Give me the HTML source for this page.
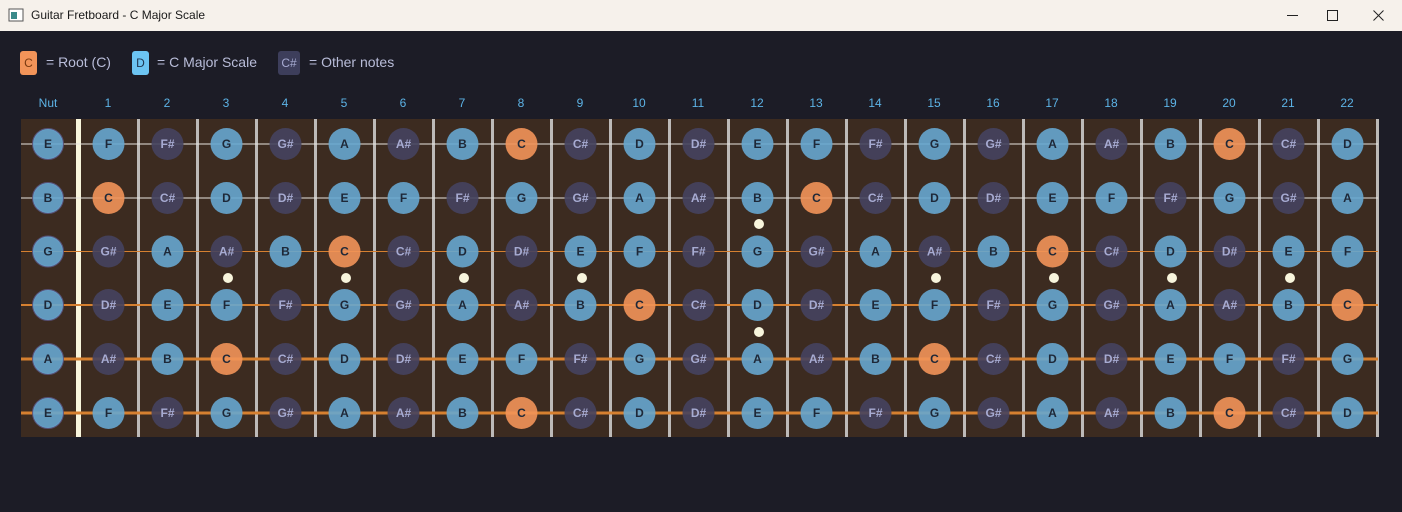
<!DOCTYPE html>
<html><head><meta charset="utf-8"><style>
*{margin:0;padding:0;box-sizing:border-box}
body{width:1402px;height:512px;overflow:hidden;background:#1c1c26;font-family:"Liberation Sans",sans-serif;position:relative}
#tb{position:absolute;left:0;top:0;width:1402px;height:31px;background:#f6f1eb;color:#1a1a1a;font-size:12px}
#tb .t{position:absolute;left:31px;top:8px}
.lg{position:absolute;top:51px;height:24px;border-radius:3px;font-size:12px;text-align:center;line-height:24px}
.lt{position:absolute;top:54px;font-size:14px;color:#b9bdd9}
svg{position:absolute;left:0;top:0}
.r circle{fill:#f29459}.s circle{fill:#66a6cf}.o circle{fill:#45435f}
circle{opacity:.9}
text{font-family:"Liberation Sans",sans-serif;font-size:12px;text-anchor:middle;font-weight:bold}
.r text,.s text{fill:#1e2838}.o text{fill:#a7abd2}
.fn{fill:#5cb3e6;font-weight:normal}
</style></head><body>
<div id="tb">
<svg width="20" height="20" style="left:8px;top:7px"><rect x="1" y="2" width="14" height="12" fill="#fff" stroke="#555"/><rect x="3" y="5" width="6" height="7" fill="#3a8a8a"/></svg>
<span class="t">Guitar Fretboard - C Major Scale</span>
<svg width="122" height="31" style="left:1280px"><line x1="7" y1="15.5" x2="18" y2="15.5" stroke="#222"/><rect x="47.5" y="10.5" width="10" height="10" fill="none" stroke="#222"/><path d="M93.5 10.5L103.5 20.5M103.5 10.5L93.5 20.5" stroke="#222"/></svg>
</div>
<div class="lg" style="left:20px;width:17px;background:#f29459;color:#7a3a10">C</div>
<div class="lt" style="left:46px">= Root (C)</div>
<div class="lg" style="left:132px;width:17px;background:#6cc4f2;color:#1e3550">D</div>
<div class="lt" style="left:157px">= C Major Scale</div>
<div class="lg" style="left:278px;width:22px;background:#3d3e5b;color:#a7abd2">C#</div>
<div class="lt" style="left:309px">= Other notes</div>
<svg width="1402" height="512" style="top:0">
<g class="fn" font-size="12">
<text class="fn" x="48" y="107">Nut</text><text class="fn" x="108" y="107">1</text><text class="fn" x="167" y="107">2</text><text class="fn" x="226" y="107">3</text><text class="fn" x="285" y="107">4</text><text class="fn" x="344" y="107">5</text><text class="fn" x="403" y="107">6</text><text class="fn" x="462" y="107">7</text><text class="fn" x="521" y="107">8</text><text class="fn" x="580" y="107">9</text><text class="fn" x="639" y="107">10</text><text class="fn" x="698" y="107">11</text><text class="fn" x="757" y="107">12</text><text class="fn" x="816" y="107">13</text><text class="fn" x="875" y="107">14</text><text class="fn" x="934" y="107">15</text><text class="fn" x="993" y="107">16</text><text class="fn" x="1052" y="107">17</text><text class="fn" x="1111" y="107">18</text><text class="fn" x="1170" y="107">19</text><text class="fn" x="1229" y="107">20</text><text class="fn" x="1288" y="107">21</text><text class="fn" x="1347" y="107">22</text>
</g>
<rect x="21" y="119" width="1357" height="318" fill="#3c2b20"/>
<rect x="76" y="119" width="5" height="318" fill="#f8f5dc"/>
<g fill="#bdbab8">
<rect x="137" y="119" width="3" height="318"/><rect x="196" y="119" width="3" height="318"/><rect x="255" y="119" width="3" height="318"/><rect x="314" y="119" width="3" height="318"/><rect x="373" y="119" width="3" height="318"/><rect x="432" y="119" width="3" height="318"/><rect x="491" y="119" width="3" height="318"/><rect x="550" y="119" width="3" height="318"/><rect x="609" y="119" width="3" height="318"/><rect x="668" y="119" width="3" height="318"/><rect x="727" y="119" width="3" height="318"/><rect x="786" y="119" width="3" height="318"/><rect x="845" y="119" width="3" height="318"/><rect x="904" y="119" width="3" height="318"/><rect x="963" y="119" width="3" height="318"/><rect x="1022" y="119" width="3" height="318"/><rect x="1081" y="119" width="3" height="318"/><rect x="1140" y="119" width="3" height="318"/><rect x="1199" y="119" width="3" height="318"/><rect x="1258" y="119" width="3" height="318"/><rect x="1317" y="119" width="3" height="318"/><rect x="1376" y="119" width="3" height="318"/>
</g>
<g fill="#f8f5dc">
<circle cx="228" cy="278" r="5" style="opacity:1"/><circle cx="346" cy="278" r="5" style="opacity:1"/><circle cx="464" cy="278" r="5" style="opacity:1"/><circle cx="582" cy="278" r="5" style="opacity:1"/><circle cx="759" cy="224" r="5" style="opacity:1"/><circle cx="759" cy="332" r="5" style="opacity:1"/><circle cx="936" cy="278" r="5" style="opacity:1"/><circle cx="1054" cy="278" r="5" style="opacity:1"/><circle cx="1172" cy="278" r="5" style="opacity:1"/><circle cx="1290" cy="278" r="5" style="opacity:1"/>
</g>
<line x1="21" y1="144" x2="1378" y2="144" stroke="#e8e4e0" stroke-width="1"/>
<line x1="21" y1="198" x2="1378" y2="198" stroke="#e8e4e0" stroke-width="1"/>
<line x1="21" y1="251.5" x2="1378" y2="251.5" stroke="#d68030" stroke-width="1"/>
<line x1="21" y1="305" x2="1378" y2="305" stroke="#d68030" stroke-width="2"/>
<line x1="21" y1="359" x2="1378" y2="359" stroke="#d68030" stroke-width="3"/>
<line x1="21" y1="413" x2="1378" y2="413" stroke="#d68030" stroke-width="3"/>
<g stroke="#5a5580" stroke-width="2" fill="none">
<circle cx="48" cy="144" r="15"/><circle cx="48" cy="198" r="15"/><circle cx="48" cy="251.5" r="15"/><circle cx="48" cy="305" r="15"/><circle cx="48" cy="359" r="15"/><circle cx="48" cy="413" r="15"/>
</g>
<g transform="translate(0,144)">
<g class="s" transform="translate(48)"><circle r="15"/><text dy="4">E</text></g>
<g class="s" transform="translate(108.5)"><circle r="16"/><text dy="4">F</text></g>
<g class="o" transform="translate(167.5)"><circle r="16"/><text dy="4">F#</text></g>
<g class="s" transform="translate(226.5)"><circle r="16"/><text dy="4">G</text></g>
<g class="o" transform="translate(285.5)"><circle r="16"/><text dy="4">G#</text></g>
<g class="s" transform="translate(344.5)"><circle r="16"/><text dy="4">A</text></g>
<g class="o" transform="translate(403.5)"><circle r="16"/><text dy="4">A#</text></g>
<g class="s" transform="translate(462.5)"><circle r="16"/><text dy="4">B</text></g>
<g class="r" transform="translate(521.5)"><circle r="16"/><text dy="4">C</text></g>
<g class="o" transform="translate(580.5)"><circle r="16"/><text dy="4">C#</text></g>
<g class="s" transform="translate(639.5)"><circle r="16"/><text dy="4">D</text></g>
<g class="o" transform="translate(698.5)"><circle r="16"/><text dy="4">D#</text></g>
<g class="s" transform="translate(757.5)"><circle r="16"/><text dy="4">E</text></g>
<g class="s" transform="translate(816.5)"><circle r="16"/><text dy="4">F</text></g>
<g class="o" transform="translate(875.5)"><circle r="16"/><text dy="4">F#</text></g>
<g class="s" transform="translate(934.5)"><circle r="16"/><text dy="4">G</text></g>
<g class="o" transform="translate(993.5)"><circle r="16"/><text dy="4">G#</text></g>
<g class="s" transform="translate(1052.5)"><circle r="16"/><text dy="4">A</text></g>
<g class="o" transform="translate(1111.5)"><circle r="16"/><text dy="4">A#</text></g>
<g class="s" transform="translate(1170.5)"><circle r="16"/><text dy="4">B</text></g>
<g class="r" transform="translate(1229.5)"><circle r="16"/><text dy="4">C</text></g>
<g class="o" transform="translate(1288.5)"><circle r="16"/><text dy="4">C#</text></g>
<g class="s" transform="translate(1347.5)"><circle r="16"/><text dy="4">D</text></g>
</g>
<g transform="translate(0,198)">
<g class="s" transform="translate(48)"><circle r="15"/><text dy="4">B</text></g>
<g class="r" transform="translate(108.5)"><circle r="16"/><text dy="4">C</text></g>
<g class="o" transform="translate(167.5)"><circle r="16"/><text dy="4">C#</text></g>
<g class="s" transform="translate(226.5)"><circle r="16"/><text dy="4">D</text></g>
<g class="o" transform="translate(285.5)"><circle r="16"/><text dy="4">D#</text></g>
<g class="s" transform="translate(344.5)"><circle r="16"/><text dy="4">E</text></g>
<g class="s" transform="translate(403.5)"><circle r="16"/><text dy="4">F</text></g>
<g class="o" transform="translate(462.5)"><circle r="16"/><text dy="4">F#</text></g>
<g class="s" transform="translate(521.5)"><circle r="16"/><text dy="4">G</text></g>
<g class="o" transform="translate(580.5)"><circle r="16"/><text dy="4">G#</text></g>
<g class="s" transform="translate(639.5)"><circle r="16"/><text dy="4">A</text></g>
<g class="o" transform="translate(698.5)"><circle r="16"/><text dy="4">A#</text></g>
<g class="s" transform="translate(757.5)"><circle r="16"/><text dy="4">B</text></g>
<g class="r" transform="translate(816.5)"><circle r="16"/><text dy="4">C</text></g>
<g class="o" transform="translate(875.5)"><circle r="16"/><text dy="4">C#</text></g>
<g class="s" transform="translate(934.5)"><circle r="16"/><text dy="4">D</text></g>
<g class="o" transform="translate(993.5)"><circle r="16"/><text dy="4">D#</text></g>
<g class="s" transform="translate(1052.5)"><circle r="16"/><text dy="4">E</text></g>
<g class="s" transform="translate(1111.5)"><circle r="16"/><text dy="4">F</text></g>
<g class="o" transform="translate(1170.5)"><circle r="16"/><text dy="4">F#</text></g>
<g class="s" transform="translate(1229.5)"><circle r="16"/><text dy="4">G</text></g>
<g class="o" transform="translate(1288.5)"><circle r="16"/><text dy="4">G#</text></g>
<g class="s" transform="translate(1347.5)"><circle r="16"/><text dy="4">A</text></g>
</g>
<g transform="translate(0,251.5)">
<g class="s" transform="translate(48)"><circle r="15"/><text dy="4">G</text></g>
<g class="o" transform="translate(108.5)"><circle r="16"/><text dy="4">G#</text></g>
<g class="s" transform="translate(167.5)"><circle r="16"/><text dy="4">A</text></g>
<g class="o" transform="translate(226.5)"><circle r="16"/><text dy="4">A#</text></g>
<g class="s" transform="translate(285.5)"><circle r="16"/><text dy="4">B</text></g>
<g class="r" transform="translate(344.5)"><circle r="16"/><text dy="4">C</text></g>
<g class="o" transform="translate(403.5)"><circle r="16"/><text dy="4">C#</text></g>
<g class="s" transform="translate(462.5)"><circle r="16"/><text dy="4">D</text></g>
<g class="o" transform="translate(521.5)"><circle r="16"/><text dy="4">D#</text></g>
<g class="s" transform="translate(580.5)"><circle r="16"/><text dy="4">E</text></g>
<g class="s" transform="translate(639.5)"><circle r="16"/><text dy="4">F</text></g>
<g class="o" transform="translate(698.5)"><circle r="16"/><text dy="4">F#</text></g>
<g class="s" transform="translate(757.5)"><circle r="16"/><text dy="4">G</text></g>
<g class="o" transform="translate(816.5)"><circle r="16"/><text dy="4">G#</text></g>
<g class="s" transform="translate(875.5)"><circle r="16"/><text dy="4">A</text></g>
<g class="o" transform="translate(934.5)"><circle r="16"/><text dy="4">A#</text></g>
<g class="s" transform="translate(993.5)"><circle r="16"/><text dy="4">B</text></g>
<g class="r" transform="translate(1052.5)"><circle r="16"/><text dy="4">C</text></g>
<g class="o" transform="translate(1111.5)"><circle r="16"/><text dy="4">C#</text></g>
<g class="s" transform="translate(1170.5)"><circle r="16"/><text dy="4">D</text></g>
<g class="o" transform="translate(1229.5)"><circle r="16"/><text dy="4">D#</text></g>
<g class="s" transform="translate(1288.5)"><circle r="16"/><text dy="4">E</text></g>
<g class="s" transform="translate(1347.5)"><circle r="16"/><text dy="4">F</text></g>
</g>
<g transform="translate(0,305)">
<g class="s" transform="translate(48)"><circle r="15"/><text dy="4">D</text></g>
<g class="o" transform="translate(108.5)"><circle r="16"/><text dy="4">D#</text></g>
<g class="s" transform="translate(167.5)"><circle r="16"/><text dy="4">E</text></g>
<g class="s" transform="translate(226.5)"><circle r="16"/><text dy="4">F</text></g>
<g class="o" transform="translate(285.5)"><circle r="16"/><text dy="4">F#</text></g>
<g class="s" transform="translate(344.5)"><circle r="16"/><text dy="4">G</text></g>
<g class="o" transform="translate(403.5)"><circle r="16"/><text dy="4">G#</text></g>
<g class="s" transform="translate(462.5)"><circle r="16"/><text dy="4">A</text></g>
<g class="o" transform="translate(521.5)"><circle r="16"/><text dy="4">A#</text></g>
<g class="s" transform="translate(580.5)"><circle r="16"/><text dy="4">B</text></g>
<g class="r" transform="translate(639.5)"><circle r="16"/><text dy="4">C</text></g>
<g class="o" transform="translate(698.5)"><circle r="16"/><text dy="4">C#</text></g>
<g class="s" transform="translate(757.5)"><circle r="16"/><text dy="4">D</text></g>
<g class="o" transform="translate(816.5)"><circle r="16"/><text dy="4">D#</text></g>
<g class="s" transform="translate(875.5)"><circle r="16"/><text dy="4">E</text></g>
<g class="s" transform="translate(934.5)"><circle r="16"/><text dy="4">F</text></g>
<g class="o" transform="translate(993.5)"><circle r="16"/><text dy="4">F#</text></g>
<g class="s" transform="translate(1052.5)"><circle r="16"/><text dy="4">G</text></g>
<g class="o" transform="translate(1111.5)"><circle r="16"/><text dy="4">G#</text></g>
<g class="s" transform="translate(1170.5)"><circle r="16"/><text dy="4">A</text></g>
<g class="o" transform="translate(1229.5)"><circle r="16"/><text dy="4">A#</text></g>
<g class="s" transform="translate(1288.5)"><circle r="16"/><text dy="4">B</text></g>
<g class="r" transform="translate(1347.5)"><circle r="16"/><text dy="4">C</text></g>
</g>
<g transform="translate(0,359)">
<g class="s" transform="translate(48)"><circle r="15"/><text dy="4">A</text></g>
<g class="o" transform="translate(108.5)"><circle r="16"/><text dy="4">A#</text></g>
<g class="s" transform="translate(167.5)"><circle r="16"/><text dy="4">B</text></g>
<g class="r" transform="translate(226.5)"><circle r="16"/><text dy="4">C</text></g>
<g class="o" transform="translate(285.5)"><circle r="16"/><text dy="4">C#</text></g>
<g class="s" transform="translate(344.5)"><circle r="16"/><text dy="4">D</text></g>
<g class="o" transform="translate(403.5)"><circle r="16"/><text dy="4">D#</text></g>
<g class="s" transform="translate(462.5)"><circle r="16"/><text dy="4">E</text></g>
<g class="s" transform="translate(521.5)"><circle r="16"/><text dy="4">F</text></g>
<g class="o" transform="translate(580.5)"><circle r="16"/><text dy="4">F#</text></g>
<g class="s" transform="translate(639.5)"><circle r="16"/><text dy="4">G</text></g>
<g class="o" transform="translate(698.5)"><circle r="16"/><text dy="4">G#</text></g>
<g class="s" transform="translate(757.5)"><circle r="16"/><text dy="4">A</text></g>
<g class="o" transform="translate(816.5)"><circle r="16"/><text dy="4">A#</text></g>
<g class="s" transform="translate(875.5)"><circle r="16"/><text dy="4">B</text></g>
<g class="r" transform="translate(934.5)"><circle r="16"/><text dy="4">C</text></g>
<g class="o" transform="translate(993.5)"><circle r="16"/><text dy="4">C#</text></g>
<g class="s" transform="translate(1052.5)"><circle r="16"/><text dy="4">D</text></g>
<g class="o" transform="translate(1111.5)"><circle r="16"/><text dy="4">D#</text></g>
<g class="s" transform="translate(1170.5)"><circle r="16"/><text dy="4">E</text></g>
<g class="s" transform="translate(1229.5)"><circle r="16"/><text dy="4">F</text></g>
<g class="o" transform="translate(1288.5)"><circle r="16"/><text dy="4">F#</text></g>
<g class="s" transform="translate(1347.5)"><circle r="16"/><text dy="4">G</text></g>
</g>
<g transform="translate(0,413)">
<g class="s" transform="translate(48)"><circle r="15"/><text dy="4">E</text></g>
<g class="s" transform="translate(108.5)"><circle r="16"/><text dy="4">F</text></g>
<g class="o" transform="translate(167.5)"><circle r="16"/><text dy="4">F#</text></g>
<g class="s" transform="translate(226.5)"><circle r="16"/><text dy="4">G</text></g>
<g class="o" transform="translate(285.5)"><circle r="16"/><text dy="4">G#</text></g>
<g class="s" transform="translate(344.5)"><circle r="16"/><text dy="4">A</text></g>
<g class="o" transform="translate(403.5)"><circle r="16"/><text dy="4">A#</text></g>
<g class="s" transform="translate(462.5)"><circle r="16"/><text dy="4">B</text></g>
<g class="r" transform="translate(521.5)"><circle r="16"/><text dy="4">C</text></g>
<g class="o" transform="translate(580.5)"><circle r="16"/><text dy="4">C#</text></g>
<g class="s" transform="translate(639.5)"><circle r="16"/><text dy="4">D</text></g>
<g class="o" transform="translate(698.5)"><circle r="16"/><text dy="4">D#</text></g>
<g class="s" transform="translate(757.5)"><circle r="16"/><text dy="4">E</text></g>
<g class="s" transform="translate(816.5)"><circle r="16"/><text dy="4">F</text></g>
<g class="o" transform="translate(875.5)"><circle r="16"/><text dy="4">F#</text></g>
<g class="s" transform="translate(934.5)"><circle r="16"/><text dy="4">G</text></g>
<g class="o" transform="translate(993.5)"><circle r="16"/><text dy="4">G#</text></g>
<g class="s" transform="translate(1052.5)"><circle r="16"/><text dy="4">A</text></g>
<g class="o" transform="translate(1111.5)"><circle r="16"/><text dy="4">A#</text></g>
<g class="s" transform="translate(1170.5)"><circle r="16"/><text dy="4">B</text></g>
<g class="r" transform="translate(1229.5)"><circle r="16"/><text dy="4">C</text></g>
<g class="o" transform="translate(1288.5)"><circle r="16"/><text dy="4">C#</text></g>
<g class="s" transform="translate(1347.5)"><circle r="16"/><text dy="4">D</text></g>
</g>
</svg>
</body></html>
